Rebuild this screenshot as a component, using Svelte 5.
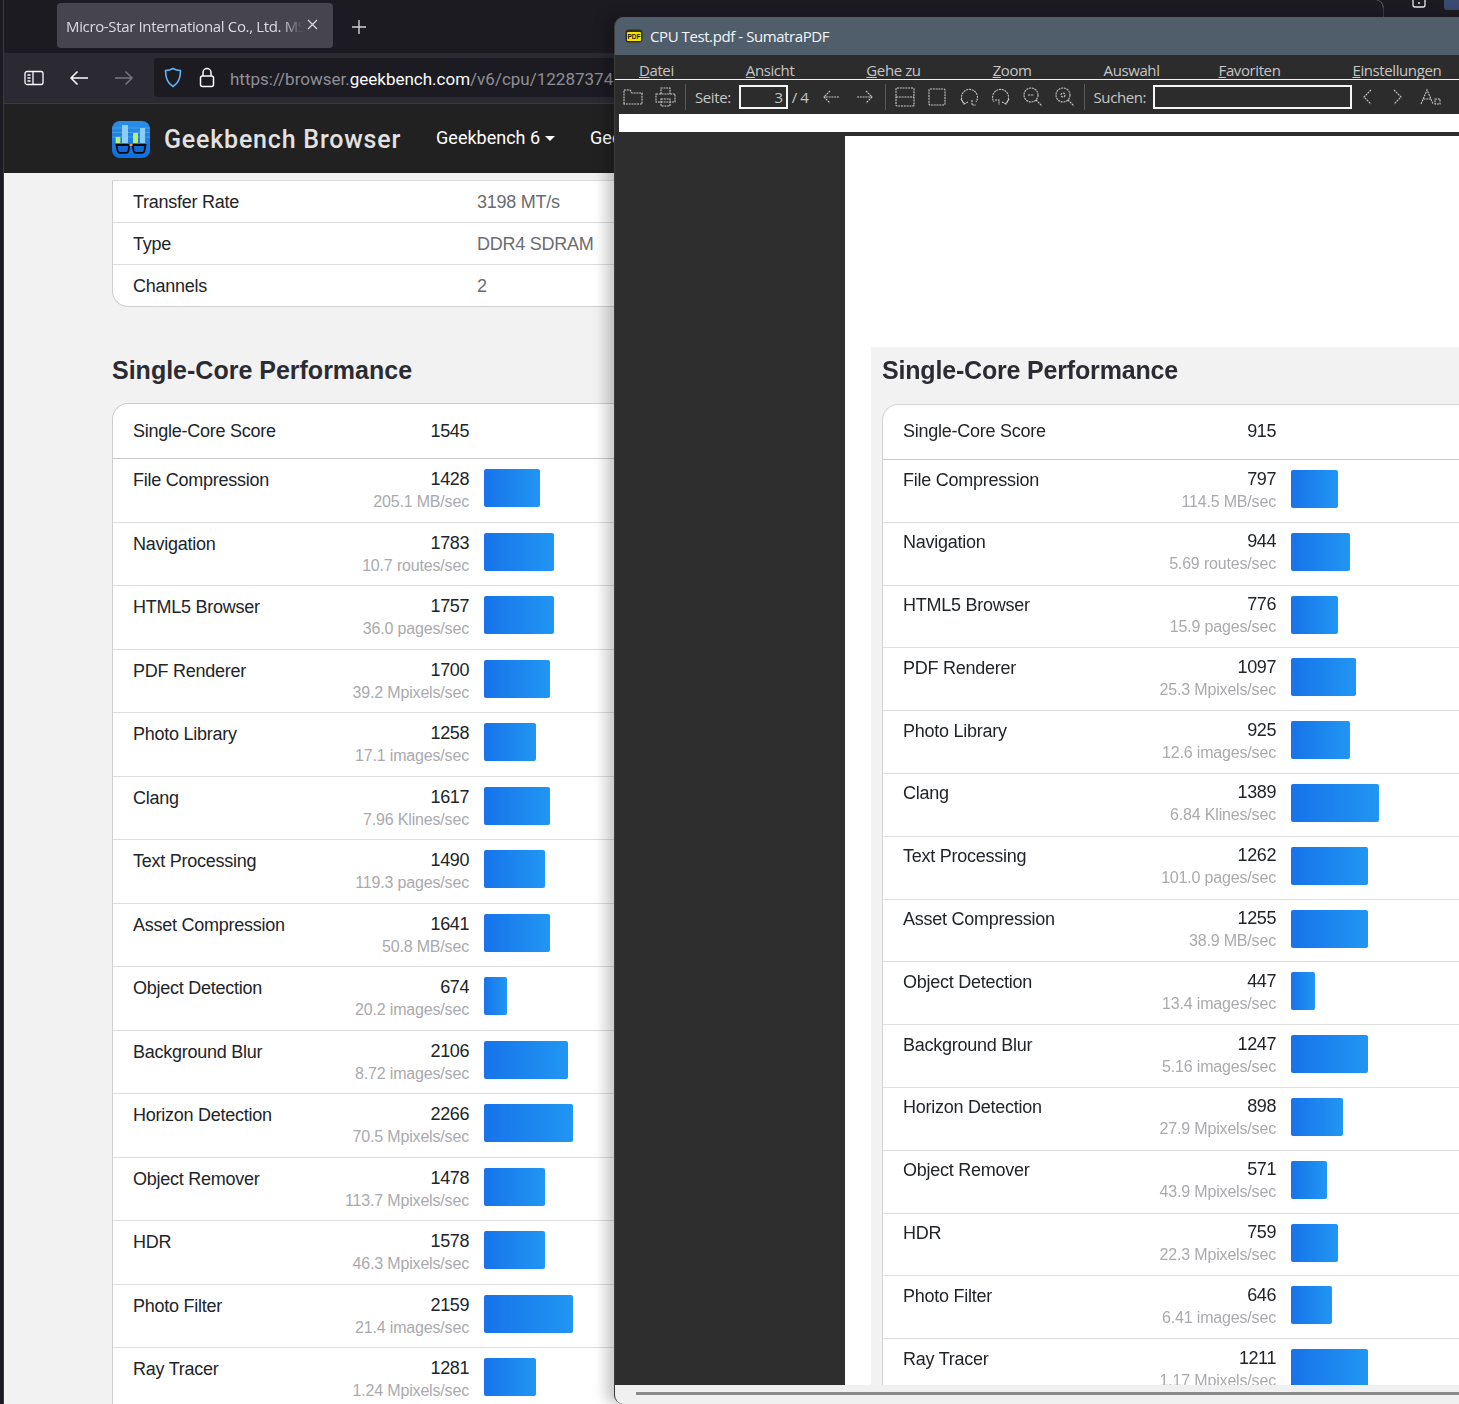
<script>
  const names = [
    "File Compression", "Navigation", "HTML5 Browser", "PDF Renderer", "Photo Library",
    "Clang", "Text Processing", "Asset Compression", "Object Detection", "Background Blur",
    "Horizon Detection", "Object Remover", "HDR", "Photo Filter", "Ray Tracer"
  ];

  // score, rate, bar width in px
  const browserData = [
    [1428, "205.1 MB/sec", 56], [1783, "10.7 routes/sec", 70], [1757, "36.0 pages/sec", 70],
    [1700, "39.2 Mpixels/sec", 66], [1258, "17.1 images/sec", 52], [1617, "7.96 Klines/sec", 66],
    [1490, "119.3 pages/sec", 61], [1641, "50.8 MB/sec", 66], [674, "20.2 images/sec", 23],
    [2106, "8.72 images/sec", 84], [2266, "70.5 Mpixels/sec", 89], [1478, "113.7 Mpixels/sec", 61],
    [1578, "46.3 Mpixels/sec", 61], [2159, "21.4 images/sec", 89], [1281, "1.24 Mpixels/sec", 52]
  ];
  const pdfData = [
    [797, "114.5 MB/sec", 47], [944, "5.69 routes/sec", 59], [776, "15.9 pages/sec", 47],
    [1097, "25.3 Mpixels/sec", 65], [925, "12.6 images/sec", 59], [1389, "6.84 Klines/sec", 88],
    [1262, "101.0 pages/sec", 77], [1255, "38.9 MB/sec", 77], [447, "13.4 images/sec", 24],
    [1247, "5.16 images/sec", 77], [898, "27.9 Mpixels/sec", 52], [571, "43.9 Mpixels/sec", 36],
    [759, "22.3 Mpixels/sec", 47], [646, "6.41 images/sec", 41], [1211, "1.17 Mpixels/sec", 77]
  ];
  const memory = [["Transfer Rate", "3198 MT/s"], ["Type", "DDR4 SDRAM"], ["Channels", "2"]];
  const menus = [
    ["D", "atei"], ["A", "nsicht"], ["G", "ehe zu"], ["Z", "oom"],
    ["", "Auswahl"], ["F", "avoriten"], ["E", "instellungen"]
  ];
</script>

{#snippet perfTable(score, rows)}
  <h2>Single-Core Performance</h2>
  <div class="card">
    <div class="row head">
      <div class="cells"><span>Single-Core Score</span><span class="score">{score}</span></div>
    </div>
    {#each rows as r, i}
      <div class="row">
        <div class="cells">
          <span>{names[i]}</span>
          <div class="nums">{r[0]}<small>{r[1]}</small></div>
        </div>
        <div class="bar" style="width: {r[2]}px"></div>
      </div>
    {/each}
  </div>
{/snippet}

<div class="desktop">
  <div class="browser">
    <div class="tabs">
      <div class="tab">
        <span class="tab-title">Micro-Star International Co., Ltd. MS-7D25</span>
        <svg width="11" height="11" viewBox="0 0 11 11"><path d="M1 1l9 9M10 1l-9 9" stroke="#d8d8dc" stroke-width="1.3"/></svg>
      </div>
      <svg class="plus" width="16" height="16" viewBox="0 0 16 16"><path d="M8 1v14M1 8h14" stroke="#cfcfd4" stroke-width="1.4"/></svg>
    </div>
    <div class="toolbar">
      <svg class="tool-side" width="20" height="16" viewBox="0 0 20 16" fill="none" stroke="#fbfbfe" stroke-width="1.3"><rect x="1" y="1.5" width="18" height="13" rx="2"/><path d="M9 1.5v13M3.5 5h3M3.5 8h3M3.5 11h3"/></svg>
      <svg class="tool-back" width="20" height="16" viewBox="0 0 20 16" fill="none" stroke="#fbfbfe" stroke-width="1.5"><path d="M19 8H2M8.5 1.5L2 8l6.5 6.5"/></svg>
      <svg class="tool-fwd" width="20" height="16" viewBox="0 0 20 16" fill="none" stroke="#77767e" stroke-width="1.5"><path d="M1 8h17M11.500 1.500L18 8l-6.500 6.500"/></svg>
      <div class="urlbar">
        <svg width="18" height="21" viewBox="0 0 18 21" fill="none" stroke="#5fb4f0" stroke-width="1.6"><path d="M9 1.500C6.500 3 4 3.500 1.500 3.600 1.500 11 3.500 16.500 9 19.500c5.500-3 7.500-8.500 7.500-15.900C14 3.500 11.500 3 9 1.500z"/></svg>
        <svg class="lock" width="16" height="21" viewBox="0 0 16 21" fill="none" stroke="#fbfbfe" stroke-width="1.5"><rect x="1.500" y="9" width="13" height="10.500" rx="2"/><path d="M4 9V5.500a4 4 0 0 1 8 0V9"/></svg>
        <span class="url">https://browser.<b>geekbench.com</b>/v6/cpu/12287374</span>
      </div>
    </div>
    <nav class="gb-nav">
      <svg class="logo" width="38" height="37" viewBox="0 0 38 37">
        <defs><linearGradient id="lg" x1="0" y1="0" x2="0" y2="1"><stop offset="0" stop-color="#2a8fe8"/><stop offset="1" stop-color="#0d6fe0"/></linearGradient></defs>
        <rect width="38" height="37" rx="8" fill="url(#lg)"/>
        <path d="M0 7h38M0 11.500h38M0 16h38" stroke="#6fb9f2" stroke-width=".8" opacity=".6"/>
        <rect x="3.700" y="16" width="4.600" height="6" fill="#b8ee6e"/>
        <rect x="10" y="4" width="6" height="18" fill="#8ccdf8"/>
        <rect x="21" y="12" width="5" height="10" fill="#b8ee6e"/>
        <rect x="28" y="7" width="5" height="15" fill="#8ccdf8"/>
        <path d="M4.500 24h13l-1 5.500a2.500 2.500 0 0 1-2.500 2.300H8A2.500 2.500 0 0 1 5.500 29.500zM20.500 24h13l-1 5.500a2.500 2.500 0 0 1-2.500 2.300h-6a2.500 2.500 0 0 1-2.500-2.300z" fill="#1268d6" stroke="#0a0a0a" stroke-width="1.800"/>
        <rect x="17.500" y="23" width="3" height="2" fill="#f0a050"/>
      </svg>
      <span class="brand">Geekbench Browser</span>
      <span class="nav-link">Geekbench 6<i class="caret"></i></span>
      <span class="nav-link">Geekbench 5</span>
    </nav>
    <main class="page">
      <div class="card memory">
        {#each memory as m}
          <div class="mem-row"><span>{m[0]}</span><span class="mem-val">{m[1]}</span></div>
        {/each}
      </div>
      {@render perfTable(1545, browserData)}
    </main>
  </div>

  <div class="top-icons">
    <svg width="14" height="8" viewBox="0 0 14 8" fill="none" stroke="#e8e8ea" stroke-width="1.300"><path d="M1 0v5a2 2 0 0 0 2 2h8a2 2 0 0 0 2-2V0M6 3h2"/></svg>
    <span class="avatar"></span>
  </div>

  <div class="sumatra">
    <div class="titlebar">
      <svg width="18" height="14" viewBox="0 0 18 14"><rect x=".5" y=".5" width="17" height="13" rx="3" fill="#33301a"/><rect x="2" y="3" width="14" height="9" rx="1" fill="#f4e200"/><text x="9" y="10" text-anchor="middle" class="pdf-mark">PDF</text></svg>
      <span>CPU Test.pdf - SumatraPDF</span>
    </div>
    <div class="menubar">
      {#each menus as m}
        <span><u>{m[0]}</u>{m[1]}</span>
      {/each}
    </div>
    <div class="pdf-tools">
      <div class="icons">
        <svg width="20" height="20" viewBox="0 0 20 20"><path d="M1 17V3h6l2 3h10v11z"/></svg>
        <svg width="21" height="20" viewBox="0 0 21 20"><path d="M6 7V1h9v6M1 7h19v8H1zM6 12h9v7H6z"/></svg>
      </div>
      <i class="sep"></i>
      <span class="lbl">Seite:</span>
      <span class="field page-no">3</span>
      <span class="lbl total">/ 4</span>
      <div class="icons arrows">
        <svg width="18" height="20" viewBox="0 0 18 20"><path d="M17 10H2M8 4l-6 6 6 6"/></svg>
        <svg width="18" height="20" viewBox="0 0 18 20"><path d="M1 10h15M10 4l6 6-6 6"/></svg>
      </div>
      <i class="sep"></i>
      <div class="icons">
        <svg width="20" height="20" viewBox="0 0 20 20"><rect x="1" y="1" width="18" height="18" rx="1"/><path d="M1 10h18"/></svg>
        <svg width="20" height="20" viewBox="0 0 20 20"><rect x="2" y="2" width="16" height="16" rx="1"/></svg>
        <svg width="20" height="20" viewBox="0 0 20 20"><path d="M6 17a8 8 0 1 1 11-2M2 12l3 5 4-2M13 13v5h4"/></svg>
        <svg width="20" height="20" viewBox="0 0 20 20"><path d="M14 17A8 8 0 1 0 3 15M18 12l-3 5-4-2M4 13h4v5"/></svg>
        <svg width="20" height="20" viewBox="0 0 20 20"><circle cx="8" cy="8" r="7"/><path d="M13 13l6 6M5 8h6"/></svg>
        <svg width="20" height="20" viewBox="0 0 20 20"><circle cx="8" cy="8" r="7"/><path d="M13 13l6 6"/><circle cx="8" cy="8" r="2"/></svg>
      </div>
      <i class="sep"></i>
      <span class="lbl">Suchen:</span>
      <span class="field search"></span>
      <div class="icons finds">
        <svg width="15" height="20" viewBox="0 0 15 20"><path d="M11 3L4 10l7 7"/></svg>
        <svg width="15" height="20" viewBox="0 0 15 20"><path d="M4 3l7 7-7 7"/></svg>
        <svg width="22" height="20" viewBox="0 0 22 20"><path d="M1 17L7 3l6 14M3.500 12h7M15 12h5v5h-5z"/></svg>
      </div>
    </div>
    <div class="white-strip"></div>
    <div class="canvas">
      <div class="pdf-page">
        <div class="pdf-grey">
          {@render perfTable(915, pdfData)}
        </div>
      </div>
    </div>
    <div class="scrollbar"><div class="thumb"></div></div>
  </div>
</div>

<style>
  :global(body) {
    margin: 0;
    overflow: hidden;
    background: #1c1b22;
  }

  .desktop {
    position: relative;
    width: 1459px;
    height: 1404px;
    overflow: hidden;
    background: #1c1b22;
    font-family: "Liberation Sans", Arial, sans-serif;
  }

  /* browser window */
  .browser {
    position: absolute;
    left: 3px;
    top: 0;
    width: 1381px;
    height: 1404px;
    background: #f2f2f2;
    border-left: 1px solid #3a3a3e;
    border-right: 1px solid #3a3a3e;
    border-top-right-radius: 8px;
    box-sizing: border-box;
    overflow: hidden;
  }

  .tabs {
    height: 53px;
    background: #1c1b22;
    display: flex;
    align-items: flex-start;
    padding: 3px 0 0 53px;
    box-sizing: border-box;
  }

  .tab {
    width: 276px;
    height: 45px;
    background: #46444f;
    border-radius: 4px;
    display: flex;
    align-items: center;
    padding: 0 15px 0 9px;
    box-sizing: border-box;
    position: relative;
  }

  .tab svg {
    flex: none;
    margin-left: 4px;
    margin-top: -3px;
  }

  .tab-title {
    flex: 1;
    overflow: hidden;
    white-space: nowrap;
    font: 15px/20px "Open Sans", sans-serif;
    letter-spacing: -0.35px;
    color: #dcdce0;
    -webkit-mask-image: linear-gradient(90deg, #000 91%, transparent);
    mask-image: linear-gradient(90deg, #000 91%, transparent);
  }

  .plus {
    margin: 16px 0 0 18px;
  }

  .toolbar {
    height: 51px;
    background: #2b2a33;
    border-bottom: 1px solid #3a3944;
    box-sizing: border-box;
    display: flex;
    align-items: center;
    padding-left: 20px;
  }

  .tool-back {
    margin-left: 25px;
  }

  .tool-fwd {
    margin-left: 25px;
  }

  .urlbar {
    margin-left: 20px;
    height: 39px;
    width: 600px;
    margin-top: -2px;
    background: #1c1b22;
    border-radius: 4px;
    display: flex;
    align-items: center;
    padding-left: 10px;
    box-sizing: border-box;
  }

  .lock {
    margin-left: 17px;
  }

  .url {
    margin: 4px 0 0 15px;
    white-space: nowrap;
    font: 17px/24px Roboto, sans-serif;
    color: #8f8f96;
  }

  .url b {
    font-weight: 400;
    color: #fbfbfe;
  }

  .gb-nav {
    height: 69px;
    background: #212121;
    display: flex;
    align-items: center;
    padding-left: 108px;
  }

  .logo {
    margin-top: 2px;
  }

  .brand {
    margin: 2px 0 0 14px;
    font: 500 25px/30px Roboto, "Liberation Sans", sans-serif;
    letter-spacing: 0.8px;
    color: #e2e2e2;
    white-space: nowrap;
  }

  .nav-link {
    margin-left: 35px;
    font: 18px/24px Roboto, "Liberation Sans", sans-serif;
    color: #fff;
    white-space: nowrap;
    margin-top: -2px;
  }

  .caret {
    display: inline-block;
    margin-left: 5px;
    vertical-align: 3px;
    border-top: 5px solid #fff;
    border-left: 5px solid transparent;
    border-right: 5px solid transparent;
  }

  .nav-link + .nav-link {
    margin-left: 35px;
  }

  .page {
    padding: 7px 0 0 108px;
  }

  /* shared table */
  h2 {
    margin: 0;
    font: 700 25px/32px "Liberation Sans", Arial, sans-serif;
    color: #2b2b33;
    white-space: nowrap;
  }

  .card {
    background: #fff;
    border: 1px solid #cfcfcf;
    border-right: 0;
    border-bottom: 0;
    border-radius: 16px 0 0 0;
    color: #212529;
    font-size: 18px;
    line-height: 24px;
    letter-spacing: -0.25px;
  }

  .card.memory {
    border-top: 1px solid #dcdcdc;
    border-bottom: 1px solid #cfcfcf;
    border-radius: 0 0 0 16px;
    margin-bottom: 47px;
    height: 127px;
    box-sizing: border-box;
  }

  .mem-row {
    height: 42px;
    box-sizing: border-box;
    display: flex;
    align-items: center;
    padding-left: 20px;
    border-bottom: 1px solid #dedede;
  }

  .mem-row:last-child {
    border-bottom: 0;
  }

  .mem-row span:first-child {
    width: 344px;
  }

  .mem-val {
    color: #6c6c72;
  }

  .browser h2 {
    margin-bottom: 17px;
  }

  .row {
    display: flex;
    gap: 15px;
    height: 63.5px;
    padding: 10px 0 0 20px;
    box-sizing: border-box;
    border-bottom: 1px solid #dedede;
  }

  .row.head {
    height: 55px;
    padding-top: 16px;
    border-bottom-color: #c9c9c9;
  }

  .cells {
    width: 336px;
    margin-top: -1px;
    display: flex;
    justify-content: space-between;
    white-space: nowrap;
  }

  .score {
    letter-spacing: -0.4px;
  }

  .nums {
    text-align: right;
    line-height: 22px;
    letter-spacing: -0.4px;
  }

  .nums small {
    display: block;
    font-size: 16px;
    color: #aaaaae;
    line-height: 23px;
    letter-spacing: -0.17px;
  }

  .bar {
    height: 38px;
    border-radius: 2px;
    background: linear-gradient(90deg, #1773ea, #2196f3);
  }

  /* pdf viewer window */
  .top-icons {
    position: absolute;
    right: 0;
    top: 0;
    width: 47px;
    height: 16px;
    display: flex;
    gap: 18px;
    align-items: flex-start;
  }

  .avatar {
    width: 15px;
    height: 10px;
    background: #3a4a70;
    border-radius: 0 0 0 3px;
  }

  .sumatra {
    position: absolute;
    left: 614px;
    top: 17px;
    width: 860px;
    height: 1387px;
    background: #2e2e2e;
    border-radius: 9px 0 0 9px;
    overflow: hidden;
    display: flex;
    flex-direction: column;
    box-shadow: -8px 0 14px rgba(0, 0, 0, 0.22);
    border-left: 1px solid #3c3c3c;
    box-sizing: border-box;
  }

  .titlebar {
    flex: none;
    height: 38px;
    background: #505d6b;
    display: flex;
    align-items: center;
    gap: 7px;
    padding-left: 10px;
    font: 15px/20px "Open Sans", sans-serif;
    letter-spacing: -0.42px;
    color: #f4f6f8;
  }

  .pdf-mark {
    font: 700 6.5px "Liberation Sans", sans-serif;
    letter-spacing: 0;
    fill: #1d1b05;
  }

  .menubar {
    flex: none;
    height: 25px;
    box-sizing: border-box;
    background: #2c2c2c;
    border-bottom: 1px solid #f2f2f2;
    display: flex;
    gap: 72px;
    padding: 5px 0 0 24px;
    font: 15px/20px "Open Sans", sans-serif;
    letter-spacing: -0.4px;
    color: #c6c6c6;
    white-space: nowrap;
  }

  .menubar span:nth-child(5) {
    margin-right: -13px;
  }

  .pdf-tools {
    flex: none;
    height: 34px;
    background: #2c2c2c;
    display: flex;
    align-items: center;
    padding-left: 8px;
    font: 15px/20px "Open Sans", sans-serif;
    letter-spacing: -0.4px;
    color: #c6c6c6;
    white-space: nowrap;
  }

  .icons {
    display: flex;
    gap: 12px;
    align-items: center;
  }

  .icons svg {
    fill: none;
    stroke: #c8c8c8;
    stroke-width: 1.1;
    stroke-dasharray: 2 0.8;
    flex: none;
  }

  .arrows {
    margin: 0 2px 0 13px;
    gap: 16px;
  }

  .finds {
    margin-left: 8px;
    gap: 15px;
  }

  .sep {
    width: 1px;
    height: 26px;
    background: #5a5a5a;
    margin: 0 9px;
  }

  .field {
    display: block;
    height: 24px;
    box-sizing: border-box;
    border: 2px solid #f5f5f5;
    margin-left: 8px;
    text-align: right;
    padding-right: 3px;
    line-height: 20px;
    color: #c6c6c6;
  }

  .page-no {
    width: 49px;
  }

  .total {
    margin-left: 4px;
  }

  .search {
    width: 199px;
    margin-left: 7px;
  }

  .white-strip {
    flex: none;
    height: 18px;
    margin-left: 4px;
    background: #fff;
  }

  .canvas {
    flex: 1;
    min-height: 0;
    padding: 4px 0 0 230px;
    overflow: hidden;
    background: #2e2e2e;
  }

  .pdf-page {
    background: #fff;
    height: 100%;
    padding: 211px 0 0 26px;
    box-sizing: border-box;
  }

  .pdf-grey {
    background: #f2f2f2;
    height: 100%;
    padding: 7px 0 0 11px;
    box-sizing: border-box;
    filter: blur(0.35px);
  }

  .pdf-grey h2 {
    margin-bottom: 18px;
    letter-spacing: -0.18px;
  }

  .pdf-grey .card {
    border-color: #d4d4d4;
  }

  .pdf-grey .row {
    height: 62.8px;
  }

  .pdf-grey .row.head {
    height: 55px;
  }

  .pdf-grey .cells {
    width: 373px;
    margin-top: -2.5px;
  }

  .scrollbar {
    flex: none;
    height: 19px;
    background: #f0f0f0;
    padding: 7px 0 0 21px;
    box-sizing: border-box;
  }

  .thumb {
    height: 3px;
    background: #8a8a8a;
  }
</style>
